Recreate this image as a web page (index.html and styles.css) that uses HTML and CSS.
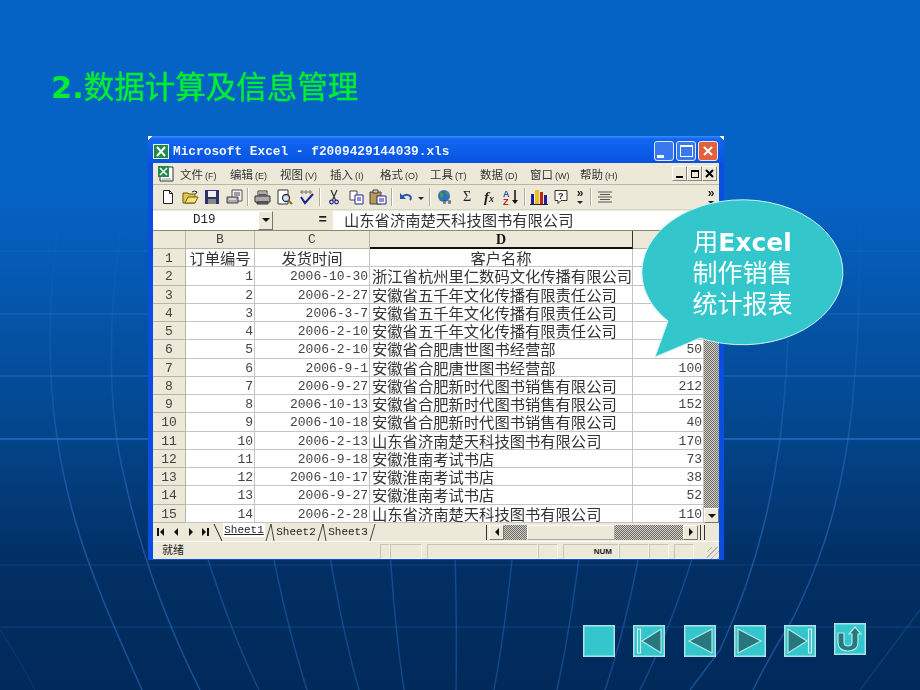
FILE: index.html
```html
<!DOCTYPE html>
<html lang="zh-CN">
<head>
    <meta charset="UTF-8">
    <title>数据计算及信息管理</title>
    <link rel="stylesheet" href="styles.css">
</head>
<body>
<div class="slide">
    <svg class="backdrop" width="920" height="690" viewBox="0 0 920 690" fill="none">
        <defs>
            <linearGradient id="fade" gradientUnits="userSpaceOnUse" x1="0" y1="200" x2="0" y2="520">
                <stop offset="0" stop-color="#2f80e0" stop-opacity="0"/>
                <stop offset="1" stop-color="#2f80e0" stop-opacity="0.45"/>
            </linearGradient>
        </defs>
        <g stroke="#2f7de0" stroke-width="1.5">
            <path d="M0 251H920" opacity=".2"/>
            <path d="M0 314H920" opacity=".3"/>
            <path d="M0 376H920" opacity=".45"/>
            <path d="M0 439H920" opacity=".7"/>
            <path d="M0 565H920" opacity=".15"/>
            <path d="M0 627H920" opacity=".18"/>
        </g>
        <g stroke="url(#fade)" stroke-width="1.5">
            <path d="M62 200C48 290 40 400 75 520C92 580 120 640 142 690"/>
            <path d="M125 200C110 290 104 400 125 480C142 560 170 630 200 690"/>
            <path d="M790 200C792 400 780 520 720 650L690 690"/>
            <path d="M860 200C862 420 842 520 792 620Q770 655 753 690"/>
        </g>
        <g stroke="#2f80e0" stroke-width="1.5" opacity=".35">
            <path d="M205 550Q230 630 259 690"/>
            <path d="M272 550Q288 630 307 690"/>
            <path d="M329 550Q342 630 359 690"/>
            <path d="M390 550Q395 630 404 690"/>
            <path d="M455 550Q457 630 456 690"/>
            <path d="M513 550Q505 630 494 690"/>
            <path d="M580 550Q570 630 557 690"/>
            <path d="M640 550Q625 630 605 690"/>
            <path d="M695 550Q670 630 640 690"/>
            <path d="M920 610Q890 650 860 690" opacity=".6"/>
            <path d="M0 630Q20 660 35 690" opacity=".4"/>
        </g>
    </svg>

    <h1 class="heading"><b>2.</b><span>数据计算及信息管理</span></h1>

    <div class="window">
        <div class="titlebar">
            <svg class="app-icon" width="16" height="15" viewBox="0 0 16 15"><rect width="16" height="15" fill="#e8f4e4"/><rect x="1" y="1" width="14" height="13" fill="#1f8a4a"/><path d="M4 3l8 9M12 3l-8 9" stroke="#fff" stroke-width="2"/></svg>
            <span class="title-text">Microsoft Excel - f2009429144039.xls</span>
            <span class="caption-btn"><i class="glyph-min"></i></span>
            <span class="caption-btn"><i class="glyph-max"></i></span>
            <span class="caption-btn caption-close">
                <svg width="12" height="12" viewBox="0 0 12 12"><path d="M2 2l8 8M10 2l-8 8" stroke="#fff" stroke-width="2"/></svg>
            </span>
        </div>

        <div class="menubar">
            <svg class="doc-icon" width="18" height="18" viewBox="0 0 18 18"><path d="M3 2h13v14H3z" fill="#fff" stroke="#333"/><rect x="1" y="1" width="11" height="11" fill="#1f8a4a"/><path d="M3 3l7 7M10 3l-7 7" stroke="#fff" stroke-width="1.5"/><path d="M5 14h9" stroke="#999"/></svg>
            <span class="menu-item">文件<u>(F)</u></span>
            <span class="menu-item">编辑<u>(E)</u></span>
            <span class="menu-item">视图<u>(V)</u></span>
            <span class="menu-item">插入<u>(I)</u></span>
            <span class="menu-item">格式<u>(O)</u></span>
            <span class="menu-item">工具<u>(T)</u></span>
            <span class="menu-item">数据<u>(D)</u></span>
            <span class="menu-item">窗口<u>(W)</u></span>
            <span class="menu-item">帮助<u>(H)</u></span>
            <span class="mdi-btns">
                <span class="mdi-btn"><i class="mdi-min"></i></span>
                <span class="mdi-btn"><i class="mdi-restore"></i></span>
                <span class="mdi-btn mdi-x">
                    <svg width="9" height="9" viewBox="0 0 9 9"><path d="M1 1l7 7M8 1l-7 7" stroke="#000" stroke-width="2"/></svg>
                </span>
            </span>
        </div>

        <div class="toolbar">
            <span class="tool"><svg width="16" height="16" viewBox="0 0 16 16"><path d="M3.5 1.5h6l3 3v10h-9z" fill="#fff" stroke="#222"/><path d="M9.5 1.5v3h3" fill="none" stroke="#222"/></svg></span>
            <span class="tool"><svg width="17" height="16" viewBox="0 0 17 16"><path d="M1 4h5l1 1h6v9H1z" fill="#e8c84a" stroke="#6b5a10"/><path d="M3 14l3-6h10l-3 6z" fill="#f6e27a" stroke="#6b5a10"/><path d="M10 3q2-2 5 0l-1.500 2" fill="none" stroke="#222"/></svg></span>
            <span class="tool"><svg width="16" height="16" viewBox="0 0 16 16"><path d="M1 1h14v14H1z" fill="#30306a"/><rect x="4" y="2" width="8" height="6" fill="#eee"/><rect x="4" y="10" width="8" height="5" fill="#888"/></svg></span>
            <span class="tool"><svg width="17" height="16" viewBox="0 0 17 16"><path d="M6 1h10v11H6z" fill="#f0f0f0" stroke="#555"/><path d="M1 8h11v6H1z" fill="#aaa" stroke="#444"/><path d="M8 4h6M8 6h6" stroke="#446"/><path d="M3 10h7" stroke="#fff"/></svg></span>
            <span class="sep"></span>
            <span class="tool"><svg width="17" height="16" viewBox="0 0 17 16"><path d="M4 2h9v5H4z" fill="#fff" stroke="#333"/><path d="M1 7h15v6H1z" fill="#aaa" stroke="#333"/><path d="M3 13h11v2H3z" fill="#777" stroke="#333"/><path d="M5 4h7M5 5.500h7" stroke="#555"/></svg></span>
            <span class="tool"><svg width="17" height="16" viewBox="0 0 17 16"><path d="M2 1h10v14H2z" fill="#fff" stroke="#333"/><circle cx="10" cy="9" r="3.500" fill="#cfe4f6" stroke="#333" stroke-width="1.300"/><path d="M12.500 11.500l3.500 3.500" stroke="#8a6a20" stroke-width="2"/></svg></span>
            <span class="tool"><svg width="17" height="16" viewBox="0 0 17 16"><path d="M2 3h12M4 1v4M8 1v4M12 1v4" stroke="#776" /><path d="M3 8l4 6 8-9" fill="none" stroke="#20209a" stroke-width="2"/></svg></span>
            <span class="sep"></span>
            <span class="tool"><svg width="10" height="16" viewBox="0 0 10 16"><path d="M2 1l4.500 10M8 1L3.500 11" stroke="#333" stroke-width="1.200"/><circle cx="2.500" cy="13" r="1.800" fill="none" stroke="#20209a" stroke-width="1.200"/><circle cx="7.500" cy="13" r="1.800" fill="none" stroke="#20209a" stroke-width="1.200"/></svg></span>
            <span class="tool"><svg width="15" height="15" viewBox="0 0 15 15"><path d="M1 1h7v9H1z" fill="#fff" stroke="#444"/><path d="M6 5h8v9H6z" fill="#fff" stroke="#20209a"/><path d="M8 8h4M8 10h4" stroke="#20209a"/></svg></span>
            <span class="tool"><svg width="18" height="16" viewBox="0 0 18 16"><path d="M1 3h11v12H1z" fill="#b89a50" stroke="#444"/><path d="M4 1h5v3H4z" fill="#ccc" stroke="#444"/><path d="M8 7h9v8H8z" fill="#fff" stroke="#20209a"/><path d="M10 10h5M10 12h5" stroke="#20209a"/></svg></span>
            <span class="sep"></span>
            <span class="tool"><svg width="14" height="12" viewBox="0 0 14 12"><path d="M3 6q4-4 8-1 2 2 0 4" fill="none" stroke="#2a50b0" stroke-width="1.800"/><path d="M1 2v6h6z" fill="#2a50b0"/></svg></span>
            <span class="drop"></span>
            <span class="sep sep-wide"></span>
            <span class="tool"><svg width="17" height="17" viewBox="0 0 17 17"><circle cx="7" cy="7" r="6" fill="#2f6fc0"/><path d="M3 3q4 1 3 4t-3 1zM8 2q4 1 4 4l-3-1z" fill="#4a9a4a"/><path d="M6 13h3M11 13h3" stroke="#333" stroke-width="3"/><path d="M6 13h8" stroke="#ccc"/></svg></span>
            <span class="tool tool-text sigma">Σ</span>
            <span class="tool tool-text fx">f<small>x</small></span>
            <span class="tool sort"><svg width="16" height="17" viewBox="0 0 16 17"><text x="0" y="8" class="sort-a">A</text><text x="0" y="16" class="sort-z">Z</text><path d="M12 1v13" stroke="#111" stroke-width="1.500"/><path d="M9 11h6l-3 4z" fill="#111"/></svg></span>
            <span class="sep"></span>
            <span class="tool"><svg width="18" height="16" viewBox="0 0 18 16"><rect x="1" y="5" width="3" height="10" fill="#20209a"/><rect x="5" y="1" width="4" height="14" fill="#e8c020"/><rect x="10" y="3" width="3" height="12" fill="#c02020"/><rect x="14" y="6" width="3" height="9" fill="#20209a"/><path d="M0 15.500h18" stroke="#222"/></svg></span>
            <span class="tool"><svg width="16" height="16" viewBox="0 0 16 16"><path d="M2 1.500h12v10H8l-3 3v-3H2z" fill="#f8f8f0" stroke="#333"/><text x="5" y="10" class="help-mark">?</text></svg></span>
            <span class="more">»<i></i></span>
            <span class="sep"></span>
            <span class="tool"><svg width="14" height="12" viewBox="0 0 14 12"><path d="M0 1h14M2 3.500h10M0 6h14M2 8.500h10M0 11h14" stroke="#555"/></svg></span>
            <span class="more more-end">»<i></i></span>
        </div>

        <div class="formula">
            <div class="name-box">D19</div>
            <span class="name-drop"><i></i></span>
            <span class="equals">=</span>
            <div class="formula-input">山东省济南楚天科技图书有限公司</div>
        </div>

        <div class="sheet-area">
            <div class="sheet">
                <div class="head"></div><div class="head">B</div><div class="head">C</div><div class="head head-active">D</div><div class="head"></div>

                <div class="rownum">1</div><div class="txt center">订单编号</div><div class="txt center">发货时间</div><div class="txt center">客户名称</div><div class="cell"></div>
                <div class="rownum">2</div><div class="cell">1</div><div class="cell">2006-10-30</div><div class="txt">浙江省杭州里仁数码文化传播有限公司</div><div class="cell"></div>
                <div class="rownum">3</div><div class="cell">2</div><div class="cell">2006-2-27</div><div class="txt">安徽省五千年文化传播有限责任公司</div><div class="cell"></div>
                <div class="rownum">4</div><div class="cell">3</div><div class="cell">2006-3-7</div><div class="txt">安徽省五千年文化传播有限责任公司</div><div class="cell"></div>
                <div class="rownum">5</div><div class="cell">4</div><div class="cell">2006-2-10</div><div class="txt">安徽省五千年文化传播有限责任公司</div><div class="cell"></div>
                <div class="rownum">6</div><div class="cell">5</div><div class="cell">2006-2-10</div><div class="txt">安徽省合肥唐世图书经营部</div><div class="cell">50</div>
                <div class="rownum">7</div><div class="cell">6</div><div class="cell">2006-9-1</div><div class="txt">安徽省合肥唐世图书经营部</div><div class="cell">100</div>
                <div class="rownum">8</div><div class="cell">7</div><div class="cell">2006-9-27</div><div class="txt">安徽省合肥新时代图书销售有限公司</div><div class="cell">212</div>
                <div class="rownum">9</div><div class="cell">8</div><div class="cell">2006-10-13</div><div class="txt">安徽省合肥新时代图书销售有限公司</div><div class="cell">152</div>
                <div class="rownum">10</div><div class="cell">9</div><div class="cell">2006-10-18</div><div class="txt">安徽省合肥新时代图书销售有限公司</div><div class="cell">40</div>
                <div class="rownum">11</div><div class="cell">10</div><div class="cell">2006-2-13</div><div class="txt">山东省济南楚天科技图书有限公司</div><div class="cell">170</div>
                <div class="rownum">12</div><div class="cell">11</div><div class="cell">2006-9-18</div><div class="txt">安徽淮南考试书店</div><div class="cell">73</div>
                <div class="rownum">13</div><div class="cell">12</div><div class="cell">2006-10-17</div><div class="txt">安徽淮南考试书店</div><div class="cell">38</div>
                <div class="rownum">14</div><div class="cell">13</div><div class="cell">2006-9-27</div><div class="txt">安徽淮南考试书店</div><div class="cell">52</div>
                <div class="rownum">15</div><div class="cell">14</div><div class="cell">2006-2-28</div><div class="txt">山东省济南楚天科技图书有限公司</div><div class="cell">110</div>
            </div>
            <div class="vscroll">
                <div class="checker"></div>
                <span class="scroll-btn"><i class="arrow-down"></i></span>
            </div>
        </div>

        <div class="tabbar">
            <span class="tab-nav"><i class="bar"></i><i class="arrow-left"></i></span>
            <span class="tab-nav"><i class="arrow-left"></i></span>
            <span class="tab-nav"><i class="arrow-right"></i></span>
            <span class="tab-nav"><i class="arrow-right"></i><i class="bar"></i></span>
            <svg class="tab-edge" width="10" height="17" viewBox="0 0 10 17"><path d="M1 0l8 17" stroke="#222"/></svg>
            <span class="tab tab-on">Sheet1</span>
            <svg class="tab-edge" width="10" height="17" viewBox="0 0 10 17"><path d="M6 0L1 17M6 0l3 17" stroke="#444" fill="none"/></svg>
            <span class="tab">Sheet2</span>
            <svg class="tab-edge" width="10" height="17" viewBox="0 0 10 17"><path d="M6 0L1 17M6 0l3 17" stroke="#444" fill="none"/></svg>
            <span class="tab">Sheet3</span>
            <svg class="tab-edge" width="8" height="17" viewBox="0 0 8 17"><path d="M6 0L1 17" stroke="#444"/></svg>
            <div class="hscroll">
                <span class="scroll-btn"><i class="arrow-left"></i></span>
                <div class="checker h1"></div>
                <div class="thumb"></div>
                <div class="checker h2"></div>
                <span class="scroll-btn"><i class="arrow-right"></i></span>
            </div>
            <span class="split"></span>
        </div>

        <div class="statusbar">
            <span class="status-text">就绪</span>
            <span class="panel w10"></span>
            <span class="panel w32 gap5"></span>
            <span class="panel w111"></span>
            <span class="panel w20 gap5"></span>
            <span class="panel w56 num">NUM</span>
            <span class="panel w30"></span>
            <span class="panel w20 gap5"></span>
            <span class="panel w20"></span>
            <span class="grip"></span>
        </div>
    </div>

    <div class="nav">
        <svg width="32" height="32" viewBox="0 0 32 32"><rect class="nav-box" x=".75" y=".75" width="30.500" height="30.500"/></svg>
        <svg width="32" height="32" viewBox="0 0 32 32"><rect class="nav-box" x=".75" y=".75" width="30.500" height="30.500"/><path class="nav-mark" d="M9 16L28 4v24z"/><path class="nav-bar" d="M4.500 4h3v24h-3z"/></svg>
        <svg width="32" height="32" viewBox="0 0 32 32"><rect class="nav-box" x=".75" y=".75" width="30.500" height="30.500"/><path class="nav-mark" d="M5 16L28 4v24z"/></svg>
        <svg width="32" height="32" viewBox="0 0 32 32"><rect class="nav-box" x=".75" y=".75" width="30.500" height="30.500"/><path class="nav-mark" d="M27 16L4 4v24z"/></svg>
        <svg width="32" height="32" viewBox="0 0 32 32"><rect class="nav-box" x=".75" y=".75" width="30.500" height="30.500"/><path class="nav-mark" d="M23 16L4 4v24z"/><path class="nav-bar" d="M24.500 4h3v24h-3z"/></svg>
        <svg class="nav-return" width="32" height="32" viewBox="0 0 32 32"><rect class="nav-box" x=".75" y=".75" width="30.500" height="30.500"/><path class="nav-mark" d="M4 10h6v9q0 4 4 4t4-4v-8h-3l6-7 6 7h-3v8q0 9-10 9t-10-9z"/></svg>
    </div>

    <div class="callout">
        <svg width="230" height="180" viewBox="0 0 230 180"><path d="M38 131L25 167L70 148A100.500 72.500 0 1 0 38 131Z" fill="#33c7cc" stroke="#cdf3f4"/></svg>
        <div class="callout-text">
            <div>用<b>Excel</b></div>
            <div>制作销售</div>
            <div>统计报表</div>
        </div>
    </div>
</div>
</body>
</html>
```

FILE: styles.css
```css
html, body {
    margin: 0;
    padding: 0;
}

.slide {
    position: relative;
    z-index: 0;
    width: 920px;
    height: 690px;
    overflow: hidden;
    background: linear-gradient(to bottom, #0563c6 0, #0563c6 190px, #04478f 420px, #022f64 560px, #012a5a 690px);
    font-family: "Noto Sans CJK SC", sans-serif;
}

.backdrop {
    position: absolute;
    left: 0;
    top: 0;
    z-index: -1;
}

.heading {
    margin: 0;
    padding: 71px 0 0 51px;
    height: 33px;
    line-height: 33px;
    font-family: "DejaVu Sans", "Noto Sans CJK SC", sans-serif;
    font-size: 30.5px;
    font-weight: 400;
    color: #00ee30;
}

.heading span {
    -webkit-text-stroke: 0.4px #00ee30;
}

/* excel window */
.window {
    display: flex;
    flex-direction: column;
    width: 576px;
    height: 424px;
    box-sizing: border-box;
    margin: 32px 0 0 148px;
    padding: 0 5px 3px;
    background: #0a4de0;
    color: #222;
}

.window > div {
    flex: none;
}

.titlebar {
    display: flex;
    align-items: center;
    height: 27px;
    box-sizing: border-box;
    margin: 0 -5px;
    padding: 3px 6px 0 5px;
    background:
        linear-gradient(135deg, #fff 3px, transparent 3px) left top / 5px 5px no-repeat,
        linear-gradient(225deg, #fff 3px, transparent 3px) right top / 5px 5px no-repeat,
        linear-gradient(to bottom, #3d8cff 0, #1166f0 3px, #0a5ae8 70%, #0a52dc 100%);
}

.app-icon {
    margin-right: 4px;
}

.title-text {
    flex: 1;
    font-family: "Liberation Mono", monospace;
    font-size: 12.8px;
    font-weight: 700;
    color: #f0f4ff;
}

.caption-btn {
    display: flex;
    align-items: center;
    justify-content: center;
    width: 18px;
    height: 18px;
    margin-left: 2px;
    border: 1px solid #dfe8ff;
    border-radius: 3px;
    background: #3a78ee;
    box-sizing: content-box;
}

.caption-close {
    background: #e2613a;
}

.glyph-min {
    width: 7px;
    height: 3px;
    margin: 10px 8px 0 0;
    background: #fff;
}

.glyph-max {
    width: 11px;
    height: 9px;
    border: 1px solid #fff;
    border-top-width: 2px;
}

.menubar {
    display: flex;
    align-items: center;
    height: 22px;
    padding-left: 4px;
    background: #ece9d8;
    font-size: 11.5px;
    border-bottom: 1px solid #bbb8a6;
    box-sizing: border-box;
}

.doc-icon {
    width: 18px;
    margin-right: 5px;
}

.menu-item {
    width: 50px;
    flex: none;
    white-space: nowrap;
    color: #333;
}

.menu-item u {
    font-family: "Liberation Sans", sans-serif;
    font-size: 9px;
    margin-left: 2px;
    text-decoration: none;
}

.mdi-btns {
    display: flex;
    margin-left: auto;
    margin-right: 2px;
}

.mdi-btn {
    display: flex;
    align-items: center;
    justify-content: center;
    width: 15px;
    height: 15px;
    border: 1px solid;
    border-color: #fff #8a8776 #8a8776 #fff;
    background: #ece9d8;
    box-sizing: border-box;
}

.mdi-min {
    width: 7px;
    height: 2px;
    margin-top: 7px;
    background: #000;
}

.mdi-restore {
    width: 6px;
    height: 5px;
    border: 1px solid #000;
    border-top-width: 2px;
}

.toolbar {
    display: flex;
    align-items: center;
    height: 25px;
    padding-left: 4px;
    background: #ece9d8;
    border-bottom: 1px solid #d8d5c4;
    box-sizing: border-box;
}

.tool {
    display: flex;
    align-items: center;
    justify-content: center;
    flex: none;
    width: 22px;
    height: 20px;
}

.tool-text {
    font-family: "Liberation Serif", serif;
    color: #222;
}

.sigma {
    font-size: 14px;
}

.fx {
    font-size: 15px;
    font-style: italic;
    font-weight: 700;
}

.fx small {
    font-size: 10px;
    margin-top: 3px;
}

.sort-a, .sort-z {
    font-family: "Liberation Sans", sans-serif;
    font-size: 9px;
    font-weight: 700;
}

.sort-a {
    fill: #2a50b0;
}

.sort-z {
    fill: #c02020;
}

.help-mark {
    font-family: "Liberation Sans", sans-serif;
    font-size: 9px;
    font-weight: 700;
    fill: #222;
}

.sep {
    flex: none;
    width: 2px;
    height: 18px;
    margin: 0 2px;
    border-left: 1px solid #b0ad9c;
    border-right: 1px solid #fff;
    box-sizing: border-box;
}

.sep-wide {
    margin: 0 3px 0 4px;
}

.drop {
    flex: none;
    width: 0;
    height: 0;
    margin: 2px 1px 0 1px;
    border: 3px solid transparent;
    border-top: 3px solid #222;
    border-bottom: 0;
}

.more {
    position: relative;
    flex: none;
    width: 16px;
    height: 18px;
    line-height: 11px;
    text-align: center;
    font-family: "Liberation Sans", sans-serif;
    font-size: 12px;
    font-weight: 700;
    color: #222;
}

.more i {
    position: absolute;
    left: 5px;
    top: 13px;
    border: 3px solid transparent;
    border-top-color: #222;
    border-bottom: 0;
}

.more-end {
    margin-left: auto;
}

.formula {
    display: flex;
    align-items: center;
    height: 20px;
    background: #ece9d8;
}

.name-box {
    width: 105px;
    height: 19px;
    line-height: 19px;
    padding-left: 40px;
    box-sizing: border-box;
    background: #fff;
    font-family: "Liberation Mono", monospace;
    font-size: 12.5px;
    color: #222;
}

.name-drop {
    display: flex;
    align-items: center;
    justify-content: center;
    width: 15px;
    height: 19px;
    box-sizing: border-box;
    border: 1px solid;
    border-color: #fff #777 #777 #fff;
    background: #ece9d8;
}

.name-drop i {
    border: 4px solid transparent;
    border-top-color: #111;
    border-bottom: 0;
}

.equals {
    width: 60px;
    text-align: right;
    padding-right: 6px;
    box-sizing: border-box;
    font-family: "Liberation Mono", monospace;
    font-size: 14px;
    font-weight: 700;
}

.formula-input {
    flex: 1;
    height: 19px;
    line-height: 17px;
    padding-left: 11px;
    background: #fff;
    font-size: 15.3px;
    white-space: nowrap;
    color: #333;
}

.sheet-area {
    display: flex;
    height: 293px;
    border-top: 1px solid #8a8776;
    box-sizing: border-box;
}

.sheet {
    display: grid;
    grid-template-columns: 33px 69px 115px 263px 71px;
    grid-template-rows: 18px repeat(15, 18.28px);
    background: #fff;
    font-family: "Liberation Mono", monospace;
    font-size: 13px;
}

.sheet > div {
    box-sizing: border-box;
    border-right: 1px solid #c4c4c4;
    border-bottom: 1px solid #c4c4c4;
    white-space: nowrap;
    line-height: 19px;
}

.sheet > .head, .sheet > .rownum {
    background: #ece9d8;
    text-align: center;
    border-color: #b8b5a4;
    color: #444;
}

.sheet > .head {
    line-height: 17px;
}

.sheet > .head-active {
    font-weight: 700;
    font-family: "Liberation Serif", serif;
    font-size: 14px;
    color: #111;
    border-bottom: 2px solid #111;
    border-right: 1px solid #333;
}

.sheet > .cell {
    padding-right: 1px;
    text-align: right;
    color: #444;
}

.sheet > .txt {
    padding-left: 2px;
    font-family: "Noto Sans CJK SC", sans-serif;
    font-size: 15.3px;
    line-height: 17px;
    color: #333;
}

.sheet > .center {
    padding-left: 0;
    text-align: center;
}

.checker {
    background: repeating-conic-gradient(#6f6f6f 0 25%, #cfccbe 0 50%) 0 0 / 2px 2px;
}

.vscroll {
    display: flex;
    flex-direction: column;
    width: 15px;
}

.vscroll .checker {
    flex: 1;
}

.scroll-btn {
    display: flex;
    align-items: center;
    justify-content: center;
    flex: none;
    width: 15px;
    height: 15px;
    box-sizing: border-box;
    border: 1px solid;
    border-color: #fff #777 #777 #fff;
    background: #ece9d8;
}

.arrow-down {
    border: 4px solid transparent;
    border-top-color: #111;
    border-bottom: 0;
}

.arrow-left {
    border: 4px solid transparent;
    border-right-color: #111;
    border-left: 0;
}

.arrow-right {
    border: 4px solid transparent;
    border-left-color: #111;
    border-right: 0;
}

.tabbar {
    display: flex;
    align-items: center;
    height: 18px;
    background: #ece9d8;
    font-family: "Liberation Mono", monospace;
    font-size: 11px;
    color: #222;
}

.tab-nav {
    display: flex;
    align-items: center;
    justify-content: center;
    gap: 1px;
    flex: none;
    width: 15px;
    height: 15px;
}

.tab-nav .bar {
    width: 2px;
    height: 8px;
    background: #111;
}

.tab-edge {
    flex: none;
}

.tab {
    flex: none;
    width: 42px;
    text-align: center;
}

.tab-on {
    text-decoration: underline;
    background: #fff;
    height: 14px;
    line-height: 14px;
    align-self: flex-start;
}

.hscroll {
    display: flex;
    align-items: center;
    margin-left: auto;
    padding: 0 2px;
    border-left: 1px solid #333;
    border-right: 1px solid #333;
}

.split {
    flex: none;
    width: 15px;
    height: 15px;
    margin-left: 3px;
    box-sizing: border-box;
    border-left: 1px solid #333;
}

.hscroll .checker {
    height: 15px;
}

.h1 {
    width: 23px;
}

.h2 {
    width: 68px;
}

.thumb {
    width: 88px;
    height: 15px;
    background: #ece9d8;
    box-sizing: border-box;
    border: 1px solid;
    border-color: #fff #aaa #aaa #fff;
}

.statusbar {
    display: flex;
    align-items: stretch;
    height: 17px;
    background: #ece9d8;
    border-top: 1px solid #fff;
    font-size: 11px;
    line-height: 15px;
    color: #222;
}

.status-text {
    width: 227px;
    padding-left: 9px;
    box-sizing: border-box;
}

.panel {
    flex: none;
    margin-top: 2px;
    border: 1px solid;
    border-color: #c8c5b4 #f8f6ee #f8f6ee #c8c5b4;
    box-sizing: border-box;
}

.gap5 {
    margin-right: 5px;
}

.w10 {
    width: 10px;
}

.w20 {
    width: 20px;
}

.w30 {
    width: 30px;
}

.w32 {
    width: 32px;
}

.w56 {
    width: 56px;
}

.w111 {
    width: 111px;
}

.num {
    padding-right: 6px;
    text-align: right;
    font-family: "Liberation Sans", sans-serif;
    font-size: 8px;
    font-weight: 700;
    line-height: 13px;
}

.grip {
    flex: 1;
    background: repeating-linear-gradient(135deg, transparent 0 3px, #b8b5a4 3px 4px) right bottom / 12px 12px no-repeat;
}

/* slide buttons */
.nav {
    display: flex;
    gap: 18.3px;
    margin: 65px 0 0 583px;
}

.nav-box {
    fill: #33c6cc;
    stroke: #a9e3e7;
    stroke-width: 1.5;
}

.nav-mark {
    fill: #27787c;
    stroke: #b4e8ea;
    stroke-width: 1.2;
}

.nav-bar {
    fill: #33c6cc;
    stroke: #d8f5f6;
    stroke-width: 1.2;
}

.nav-return {
    margin-top: -2px;
}

/* speech bubble over the sheet */
.callout {
    position: absolute;
    left: 630px;
    top: 190px;
    width: 230px;
    height: 180px;
}

.callout-text {
    position: absolute;
    left: 12px;
    top: 37px;
    width: 201px;
    text-align: center;
    font-family: "DejaVu Sans", "Noto Sans CJK SC", sans-serif;
    font-size: 25px;
    line-height: 31px;
    color: #fff;
}
```
